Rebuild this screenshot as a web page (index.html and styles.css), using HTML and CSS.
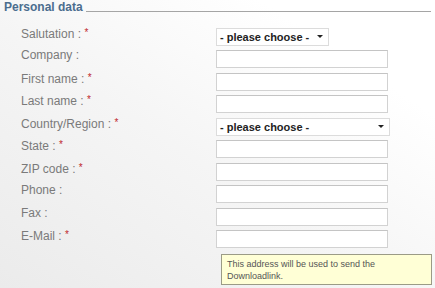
FILE: index.html
```html
<!DOCTYPE html>
<html>
<head>
<title>Personal data</title>
<meta charset="utf-8">
<link rel="stylesheet" href="styles.css">
</head>
<body>

<div class="section">
	<div class="section-title"><span>Personal data</span><div class="rule"></div></div>

	<div class="form">
		<div class="row">
			<label>Salutation : <span class="req">*</span></label>
			<div class="select short"><span>- please choose -</span><span class="arrow"></span></div>
		</div>
		<div class="row">
			<label>Company :</label>
			<input type="text">
		</div>
		<div class="row">
			<label>First name : <span class="req">*</span></label>
			<input type="text">
		</div>
		<div class="row">
			<label>Last name : <span class="req">*</span></label>
			<input type="text">
		</div>
		<div class="row">
			<label>Country/Region : <span class="req">*</span></label>
			<div class="select long"><span>- please choose -</span><span class="arrow"></span></div>
		</div>
		<div class="row">
			<label>State : <span class="req">*</span></label>
			<input type="text">
		</div>
		<div class="row">
			<label>ZIP code : <span class="req">*</span></label>
			<input type="text">
		</div>
		<div class="row">
			<label>Phone :</label>
			<input type="text">
		</div>
		<div class="row">
			<label>Fax :</label>
			<input type="text">
		</div>
		<div class="row">
			<label>E-Mail : <span class="req">*</span></label>
			<input type="text">
		</div>
		<div class="hint-row">
			<div class="hint">This address will be used to send the<br>Downloadlink.</div>
		</div>
	</div>
</div>

</body>
</html>
```

FILE: styles.css
```css
html, body {
	height: 100%;
}

body {
	margin: 0;
	font-family: "Liberation Sans", Arial, sans-serif;
	font-size: 12px;
	color: #7a7a7a;
	background: linear-gradient(to top right, #ebebeb 0%, #f5f5f5 45%, #ffffff 80%);
}

.section {
	padding: 0 4px;
}

.section-title {
	display: flex;
	align-items: flex-end;
	gap: 3px;
	height: 14px;
	font-weight: bold;
	color: #4b6d8e;
	line-height: 14px;
}

.section-title .rule {
	flex: 1;
	border-bottom: 1px solid #a5a5a5;
	margin-bottom: 2px;
}

.form {
	padding-top: 13.5px;
}

.row {
	display: grid;
	grid-template-columns: 212px auto;
	height: 22.5px;
	align-items: start;
}

.row label {
	padding-left: 17px;
	line-height: 10px;
	white-space: nowrap;
}

.req {
	color: #c0282d;
	font-size: 10px;
	vertical-align: 2px;
}

input[type=text] {
	box-sizing: border-box;
	width: 172px;
	height: 18px;
	margin: 0;
	border: 1px solid #d2d2d2;
	border-top-color: #c4c4c4;
	background: #fff;
}

.select {
	box-sizing: border-box;
	height: 18px;
	display: flex;
	align-items: center;
	justify-content: space-between;
	padding: 0 5px 0 3px;
	border: 1px solid #dcdcdc;
	background: #fff;
	font-weight: bold;
	color: #222;
	font-size: 11px;
	white-space: nowrap;
}

.select.short {
	width: 113px;
}

.select.long {
	width: 174px;
}

.arrow {
	width: 0;
	height: 0;
	border-left: 3px solid transparent;
	border-right: 3px solid transparent;
	border-top: 3px solid #222;
}

.hint-row {
	padding-left: 217px;
	padding-top: 1.5px;
}

.hint {
	box-sizing: border-box;
	width: 211px;
	height: 31px;
	padding: 3px 5px;
	background: #ffffd6;
	border: 1px solid #9b9b86;
	font-size: 9px;
	line-height: 12px;
	color: #555;
}
```
